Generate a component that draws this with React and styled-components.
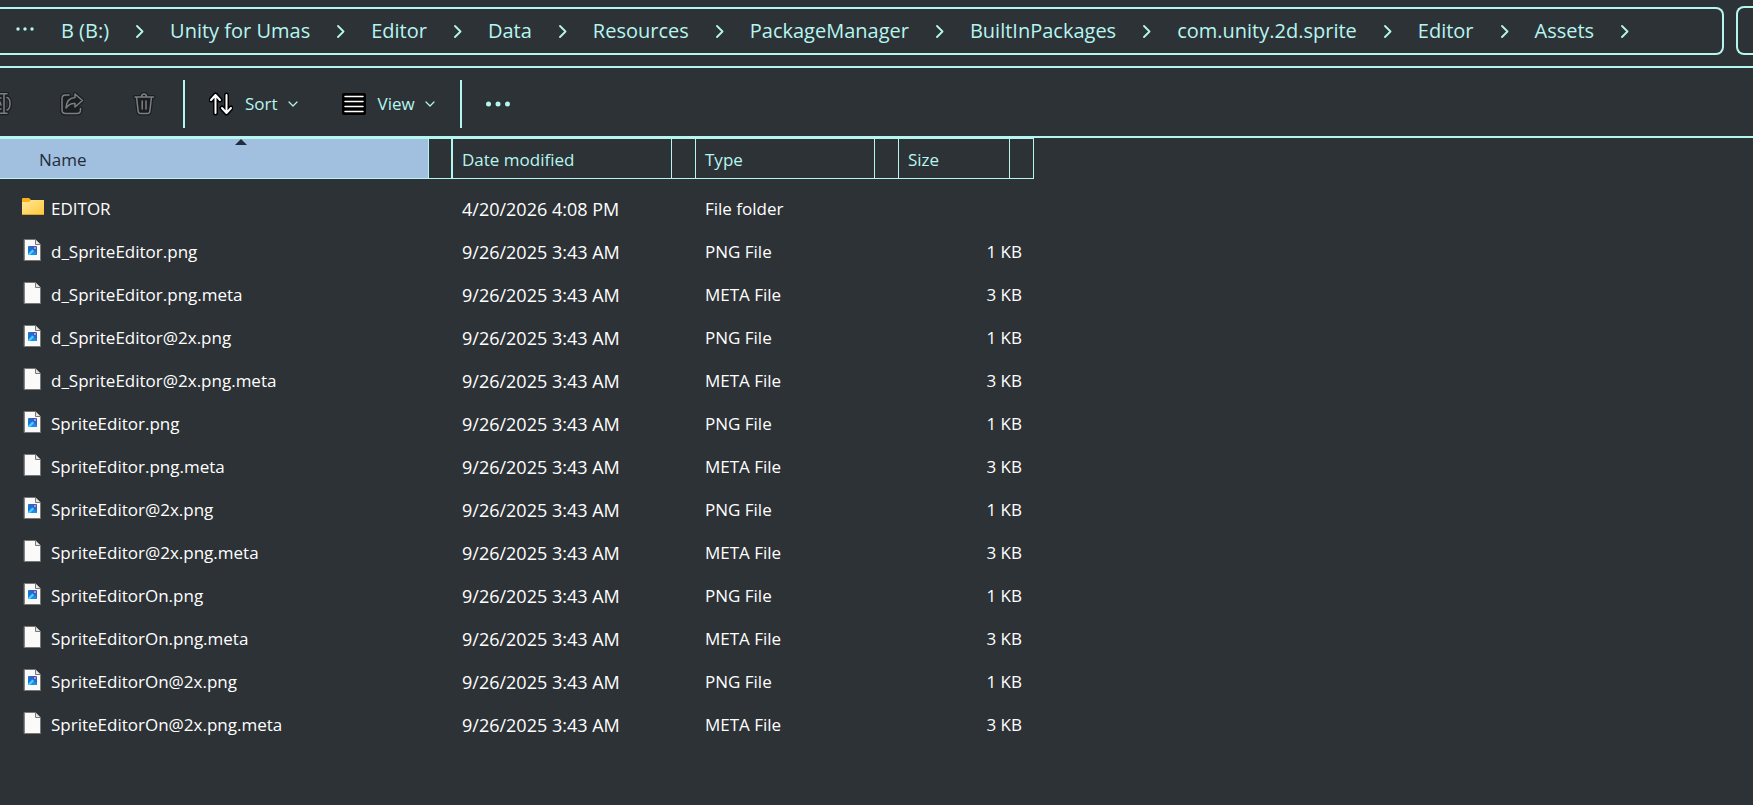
import styled, { createGlobalStyle } from "styled-components";

const crumbs = [
  "B (B:)",
  "Unity for Umas",
  "Editor",
  "Data",
  "Resources",
  "PackageManager",
  "BuiltInPackages",
  "com.unity.2d.sprite",
  "Editor",
  "Assets",
];

const columns = [
  { label: "Name", sorted: true },
  { label: "Date modified" },
  { label: "Type" },
  { label: "Size" },
];

const spriteNames = [
  "d_SpriteEditor",
  "d_SpriteEditor@2x",
  "SpriteEditor",
  "SpriteEditor@2x",
  "SpriteEditorOn",
  "SpriteEditorOn@2x",
];

const files = [
  { name: "EDITOR", date: "4/20/2026 4:08 PM", type: "File folder", size: "", icon: "folder" },
  ...spriteNames.flatMap((name) => [
    { name: `${name}.png`, date: "9/26/2025 3:43 AM", type: "PNG File", size: "1 KB", icon: "image" },
    { name: `${name}.png.meta`, date: "9/26/2025 3:43 AM", type: "META File", size: "3 KB", icon: "blank" },
  ]),
];

// every disabled icon is drawn twice: a dark halo below, the grey line on top
const Outlined = ({ d, line, halo }) => (
  <>
    <path d={d} stroke={halo} strokeWidth="4" />
    <path d={d} stroke={line} strokeWidth="1.5" />
  </>
);

const RenameIcon = () => (
  <Drawing width="12" height="24" viewBox="0 0 12 24">
    <Outlined
      d="M4 2V21M0 1.7H7M0 21.3H7M7 5.5C9 6 10 7.5 10 11.5S9 17.500 7 18M0 6H1M0 17H1M0 10L1 13"
      line="#7c7f82"
      halo="#1b1f22"
    />
  </Drawing>
);

const ShareIcon = () => (
  <Drawing width="24" height="24" viewBox="0 0 24 24">
    <path
      d="M9 3H5.500Q2 3 2 6.500V18Q2 21.500 5.500 21.500H17Q20.500 21.500 20.500 18V16.500"
      fill="#1b1f22"
      stroke="#1b1f22"
      strokeWidth="4"
    />
    <path
      d="M15 2L22.500 8.500L15 15V11.500Q9.500 11 6 16Q6.500 6 15 5.500Z"
      fill="#1b1f22"
      stroke="#1b1f22"
      strokeWidth="4"
    />
    <path d="M9 3H5.500Q2 3 2 6.500V18Q2 21.500 5.500 21.500H17Q20.500 21.500 20.500 18V16.500" stroke="#7c7f82" strokeWidth="1.5" />
    <path d="M15 2L22.500 8.500L15 15V11.500Q9.500 11 6 16Q6.500 6 15 5.500Z" stroke="#7c7f82" strokeWidth="1.5" />
  </Drawing>
);

const TrashIcon = () => (
  <Drawing width="24" height="24" viewBox="0 0 24 24">
    <path d="M4 5L6 21.500H18L20 5Z" fill="#1b1f22" />
    <Outlined
      d="M3 5H21.500M9.500 5Q9.500 2 12 2T14.500 5M4.500 5L6.200 19.500Q6.500 21.500 8.500 21.500H15.500Q17.500 21.500 17.800 19.500L19.500 5M10.200 9V17M14 9V17"
      line="#7c7f82"
      halo="#1b1f22"
    />
  </Drawing>
);

const SortIcon = () => (
  <Drawing width="24" height="24" viewBox="0 0 24 24">
    <path d="M6.500 21V3M2 8L6.500 3L11 8M17.500 3V21M13 16L17.500 21L22 16" stroke="#000" strokeWidth="5" />
    <path d="M6.500 21V3M2 8L6.500 3L11 8M17.500 3V21M13 16L17.500 21L22 16" stroke="#fff" strokeWidth="2" />
  </Drawing>
);

const ViewIcon = () => (
  <Drawing width="24" height="24" viewBox="0 0 24 24">
    <rect y="1" width="24" height="22" rx="2" fill="#000" />
    <path d="M3 4.500H21M3 9.500H21M3 14.500H21M3 19.500H21" stroke="#fff" strokeWidth="1.5" />
  </Drawing>
);

const ChevronDown = () => (
  <Drawing width="10" height="10" viewBox="0 0 10 10">
    <path d="M1 3L5 7L9 3" stroke="#b6f6f0" strokeWidth="1.2" />
  </Drawing>
);

const ChevronRight = () => (
  <Drawing width="8" height="14" viewBox="0 0 8 14">
    <path d="M1 2L6.500 7.500L1 13" stroke="#b6f6f0" strokeWidth="1.8" />
  </Drawing>
);

const MoreIcon = () => (
  <Drawing width="24" height="6" viewBox="0 0 24 6" fill="#b6f6f0">
    <circle cx="2.500" cy="3" r="2.500" />
    <circle cx="12" cy="3" r="2.500" />
    <circle cx="21.500" cy="3" r="2.500" />
  </Drawing>
);

const OverflowIcon = () => (
  <Drawing width="18" height="8" viewBox="0 0 18 8" fill="#b6f6f0">
    <circle cx="2" cy="2" r="1.700" />
    <circle cx="9" cy="2" r="1.700" />
    <circle cx="16" cy="2" r="1.700" />
  </Drawing>
);

const FileIcon = ({ kind }) => {
  if (kind === "folder") {
    return (
      <Drawing width="22" height="25" viewBox="0 0 22 25">
        <defs>
          <linearGradient id="folder" x1="0" y1="0" x2="1" y2="1">
            <stop offset="0" stopColor="#ffe69c" />
            <stop offset="1" stopColor="#ffc937" />
          </linearGradient>
        </defs>
        <path d="M0 3Q0 2 1 2H7L9 4H21Q22 4 22 5V8H0Z" fill="#f6b21b" />
        <path d="M0 6H7L9 4H22V18Q22 19 21 19H1Q0 19 0 18Z" fill="url(#folder)" />
        <path d="M0 18.500H22" stroke="#e0a52c" />
      </Drawing>
    );
  }
  return (
    <Drawing width="22" height="25" viewBox="0 0 22 25">
      <path d="M2.500 0.500H13.500L18.500 5.500V21.500H2.500Z" fill="#fafafa" stroke="#797774" />
      <path d="M13.500 0.500V5.500H18.500" fill="#e4e4e4" stroke="#797774" />
      {kind === "image" && (
        <>
          <defs>
            <linearGradient id="picture" x1="0" y1="1" x2="1" y2="0">
              <stop offset="0.400" stopColor="#1578d4" />
              <stop offset="1" stopColor="#5b46b2" />
            </linearGradient>
          </defs>
          <rect x="6" y="7" width="9" height="9" rx="1" fill="url(#picture)" />
          <path d="M6 15L10.500 10.500L15 15Q15 16 14 16H7Q6 16 6 15Z" fill="#1b8fe6" />
          <path d="M6 15L10.500 10.500L12 12L8 16H7Q6 16 6 15Z" fill="#4cd0fb" />
          <circle cx="13" cy="9" r="0.800" fill="#fff" />
        </>
      )}
    </Drawing>
  );
};

const App = () => {
  return (
    <Explorer>
      <GlobalStyle />
      <NavigationRow>
        <AddressBar aria-label="Address">
          <OverflowButton aria-label="Show more folders">
            <OverflowIcon />
          </OverflowButton>
          {crumbs.map((crumb, i) => (
            <Crumb key={i}>
              <CrumbButton>{crumb}</CrumbButton>
              <ChevronRight />
            </Crumb>
          ))}
        </AddressBar>
        <SearchBox type="search" aria-label="Search" />
      </NavigationRow>
      <Toolbar>
        <IconButton aria-label="Rename" disabled $flush>
          <RenameIcon />
        </IconButton>
        <IconButton aria-label="Share" disabled>
          <ShareIcon />
        </IconButton>
        <IconButton aria-label="Delete" disabled>
          <TrashIcon />
        </IconButton>
        <Separator />
        <MenuButton>
          <SortIcon />
          <MenuLabel>Sort</MenuLabel>
          <ChevronDown />
        </MenuButton>
        <MenuButton>
          <ViewIcon />
          <MenuLabel>View</MenuLabel>
          <ChevronDown />
        </MenuButton>
        <Separator />
        <MoreButton aria-label="See more">
          <MoreIcon />
        </MoreButton>
      </Toolbar>
      <FileTable>
        <colgroup>
          <Column $width={452} />
          <Column $width={243} />
          <Column $width={203} />
          <Column $width={136} />
        </colgroup>
        <thead>
          <tr>
            {columns.map((column) => (
              <HeaderCell
                key={column.label}
                $sorted={column.sorted}
                aria-sort={column.sorted ? "ascending" : undefined}
              >
                <HeaderContent>
                  <HeaderButton $sorted={column.sorted}>
                    {column.label}
                    {column.sorted && <SortArrow />}
                  </HeaderButton>
                  <FilterButton $sorted={column.sorted} aria-label={`Filter ${column.label}`} />
                </HeaderContent>
              </HeaderCell>
            ))}
          </tr>
        </thead>
        <FileRows>
          {files.map((file) => (
            <tr key={file.name}>
              <NameCell>
                <FileName>
                  <FileIcon kind={file.icon} />
                  {file.name}
                </FileName>
              </NameCell>
              <DateCell>{file.date}</DateCell>
              <Cell>{file.type}</Cell>
              <Cell $right>{file.size}</Cell>
            </tr>
          ))}
        </FileRows>
      </FileTable>
    </Explorer>
  );
};

const GlobalStyle = createGlobalStyle`
  * {
    box-sizing: border-box;
  }

  body {
    margin: 0;
    background: #2d3236;
    color: #fff;
    font-family: "Open Sans", "Noto Sans", sans-serif;
    font-size: 17px;
  }

  button {
    margin: 0;
    padding: 0;
    border: 0;
    background: none;
    color: #b6f6f0;
    font: inherit;
  }
`;

const Explorer = styled.main`
  min-height: 100vh;
`;

const Drawing = styled.svg.attrs((props) => ({
  fill: props.fill || "none",
  "aria-hidden": true,
}))`
  display: block;
  flex: none;
  stroke-linecap: round;
  stroke-linejoin: round;
`;

const NavigationRow = styled.div`
  display: flex;
  align-items: flex-end;
  gap: 12px;
  height: 68px;
  padding-bottom: 11px;
  border-bottom: 2px solid #b6f6f0;
`;

const AddressBar = styled.nav`
  display: flex;
  flex: 1;
  align-items: center;
  height: 48px;
  padding-left: 16px;
  border: 2px solid #b6f6f0;
  border-left: 0;
  border-radius: 0 8px 8px 0;
`;

const OverflowButton = styled.button`
  margin-right: 27px;
`;

const Crumb = styled.span`
  display: flex;
  align-items: center;
  gap: 27px;
  margin-right: 26px;
`;

const CrumbButton = styled.button`
  font-size: 20px;
  line-height: 28px;
  white-space: nowrap;
`;

const SearchBox = styled.input`
  width: 17px;
  height: 49px;
  padding: 0;
  border: 2px solid #b6f6f0;
  border-right: 0;
  border-radius: 8px 0 0 8px;
  background: transparent;
  color: #b6f6f0;
  appearance: none;
`;

const Toolbar = styled.div`
  display: flex;
  align-items: center;
  height: 70px;
  padding-top: 4px;
  border-bottom: 2px solid #b6f6f0;
`;

const IconButton = styled.button`
  padding-right: 22px;
  padding-left: ${(props) => (props.$flush ? "0" : "26px")};
`;

const MoreButton = styled.button`
  padding: 0 24px;
`;

const Separator = styled.div`
  width: 2px;
  height: 48px;
  margin-left: 5px;
  background: #b6f6f0;
`;

const MenuButton = styled.button`
  display: flex;
  align-items: center;
  padding: 0 20px 0 24px;
`;

const MenuLabel = styled.span`
  margin: 0 10px 0 12px;
  line-height: 24px;
`;

const FileTable = styled.table`
  table-layout: fixed;
  width: 1034px;
  border-spacing: 0;
`;

const Column = styled.col`
  width: ${(props) => props.$width}px;
`;

const HeaderCell = styled.th`
  padding: 0;
  border: 1px solid #b6f6f0;
  border-right-width: 0;
  border-left-width: ${(props) => (props.$sorted ? "0" : "1px")};
  font-weight: 400;

  &:last-child {
    border-right-width: 1px;
  }
`;

const HeaderContent = styled.div`
  display: flex;
  height: 39px;
`;

const HeaderButton = styled.button`
  position: relative;
  flex: 1;
  padding-top: 2px;
  padding-left: ${(props) => (props.$sorted ? "39px" : "9px")};
  background: ${(props) => (props.$sorted ? "#a1bfde" : "none")};
  color: ${(props) => (props.$sorted ? "#212d3b" : "#b6f6f0")};
  text-align: left;
`;

const SortArrow = styled.span`
  position: absolute;
  top: 0;
  right: 0;
  left: 54px;
  width: 12px;
  margin: 0 auto;
  border: 6px solid transparent;
  border-top: 0;
  border-bottom-color: #212d3b;
`;

const FilterButton = styled.button`
  width: 24px;
  border-left: 1px solid #b6f6f0;
  border-right: ${(props) => (props.$sorted ? "1px solid #b6f6f0" : "0")};
`;

const FileRows = styled.tbody`
  &::before {
    content: "";
    display: block;
    height: 8px;
  }
`;

const Cell = styled.td`
  height: 43px;
  padding: 0 12px 0 10px;
  text-align: ${(props) => (props.$right ? "right" : "left")};
  white-space: nowrap;
`;

const NameCell = styled(Cell)`
  padding-left: 22px;
`;

const DateCell = styled(Cell)`
  font-size: 18px;
`;

const FileName = styled.div`
  display: flex;
  align-items: center;
  gap: 7px;
`;

export default App;
